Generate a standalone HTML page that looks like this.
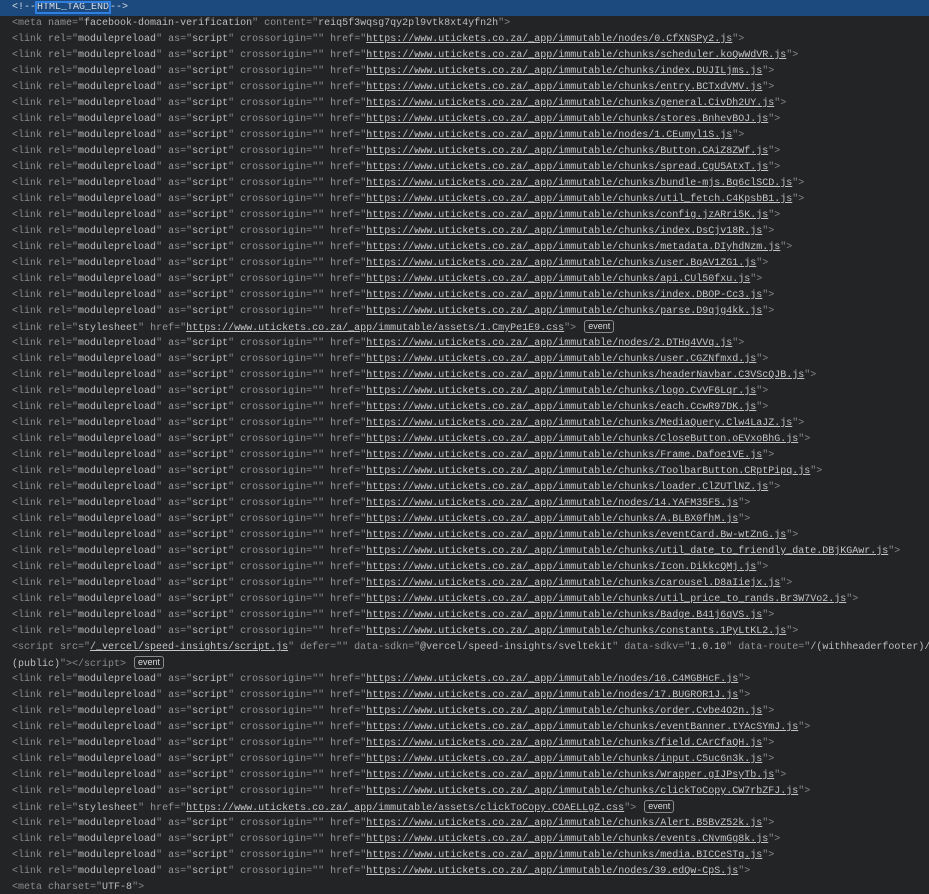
<!DOCTYPE html>
<html><head><meta charset="utf-8"><style>
html,body{margin:0;padding:0;background:#232425;width:929px;height:894px;overflow:hidden}
body{font-family:"Liberation Mono",monospace;font-size:10px;color:#8a8a8a}
.l{height:16px;line-height:16px;white-space:pre;padding-left:12px}
.h{background:#1d4a7e;color:#d8dde5}
.h b{font-weight:normal;outline:2px solid #2f7fe0;outline-offset:-1px;background:#1d4a7e;padding:0 1px}
.a{color:#959595}.v{color:#bdbdbd}.u{color:#c4c4c4;text-decoration:underline}
.e{display:inline-block;font-family:"Liberation Sans",sans-serif;font-size:9px;line-height:11px;border:1px solid #8a8a8a;border-radius:3px;padding:0 3px;color:#ddd;margin-left:2px;vertical-align:1px}
</style></head><body>
<div class="l h">&lt;!--<b>HTML_TAG_END</b>--&gt;</div>
<div class="l">&lt;meta <span class="a">name</span>="<span class="v">facebook-domain-verification</span>" <span class="a">content</span>="<span class="v">reiq5f3wqsg7qy2pl9vtk8xt4yfn2h</span>"&gt;</div>
<div id="c"></div>
<script>
var P='<span class="a">rel</span>="<span class="v">modulepreload</span>" <span class="a">as</span>="<span class="v">script</span>" <span class="a">crossorigin</span>="" <span class="a">href</span>="';
var B='https://www.utickets.co.za/_app/immutable/';
function L(p){return '<div class="l">&lt;link '+P+'<span class="u">'+B+p+'</span>"&gt;</div>';}
function S(p){return '<div class="l">&lt;link <span class="a">rel</span>="<span class="v">stylesheet</span>" <span class="a">href</span>="<span class="u">'+B+p+'</span>"&gt; <span class="e">event</span></div>';}
var a=["nodes/0.CfXNSPy2.js","chunks/scheduler.koQwWdVR.js","chunks/index.DUJILjms.js","chunks/entry.BCTxdVMV.js","chunks/general.CivDh2UY.js","chunks/stores.BnhevBOJ.js","nodes/1.CEumyl1S.js","chunks/Button.CAiZ8ZWf.js","chunks/spread.CgU5AtxT.js","chunks/bundle-mjs.Bq6clSCD.js","chunks/util_fetch.C4KpsbB1.js","chunks/config.jzARri5K.js","chunks/index.DsCjv18R.js","chunks/metadata.DIyhdNzm.js","chunks/user.BqAV1ZG1.js","chunks/api.CUl50fxu.js","chunks/index.DBOP-Cc3.js","chunks/parse.D9qjg4kk.js"];
var b=["nodes/2.DTHq4VVq.js","chunks/user.CGZNfmxd.js","chunks/headerNavbar.C3VScQJB.js","chunks/logo.CvVF6Lqr.js","chunks/each.CcwR97DK.js","chunks/MediaQuery.Clw4LaJZ.js","chunks/CloseButton.oEVxoBhG.js","chunks/Frame.Dafoe1VE.js","chunks/ToolbarButton.CRptPipq.js","chunks/loader.ClZUTlNZ.js","nodes/14.YAFM35F5.js","chunks/A.BLBX0fhM.js","chunks/eventCard.Bw-wtZnG.js","chunks/util_date_to_friendly_date.DBjKGAwr.js","chunks/Icon.DikkcQMj.js","chunks/carousel.D8aIiejx.js","chunks/util_price_to_rands.Br3W7Vo2.js","chunks/Badge.B41j6qVS.js","chunks/constants.1PyLtKL2.js"];
var c=["nodes/16.C4MGBHcF.js","nodes/17.BUGROR1J.js","chunks/order.Cvbe4O2n.js","chunks/eventBanner.tYAcSYmJ.js","chunks/field.CArCfaQH.js","chunks/input.C5uc6n3k.js","chunks/Wrapper.gIJPsyTb.js","chunks/clickToCopy.CW7rbZFJ.js"];
var d=["chunks/Alert.B5BvZ52k.js","chunks/events.CNvmGg8k.js","chunks/media.BICCeSTq.js","nodes/39.edQw-CpS.js"];
var h='';a.forEach(function(x){h+=L(x)});h+=S("assets/1.CmyPe1E9.css");b.forEach(function(x){h+=L(x)});
h+='<div class="l">&lt;script <span class="a">src</span>="<span class="u">/_vercel/speed-insights/script.js</span>" <span class="a">defer</span>="" <span class="a">data-sdkn</span>="<span class="v">@vercel/speed-insights/sveltekit</span>" <span class="a">data-sdkv</span>="<span class="v">1.0.10</span>" <span class="a">data-route</span>="<span class="v">/(withheaderfooter)/</span></div><div class="l"><span class="v">(public)</span>"&gt;&lt;/script&gt; <span class="e">event</span></div>';
c.forEach(function(x){h+=L(x)});h+=S("assets/clickToCopy.COAELLgZ.css");d.forEach(function(x){h+=L(x)});
h+='<div class="l">&lt;meta <span class="a">charset</span>="<span class="v">UTF-8</span>"&gt;</div>';
document.getElementById('c').innerHTML=h;
</script>
</body></html>
